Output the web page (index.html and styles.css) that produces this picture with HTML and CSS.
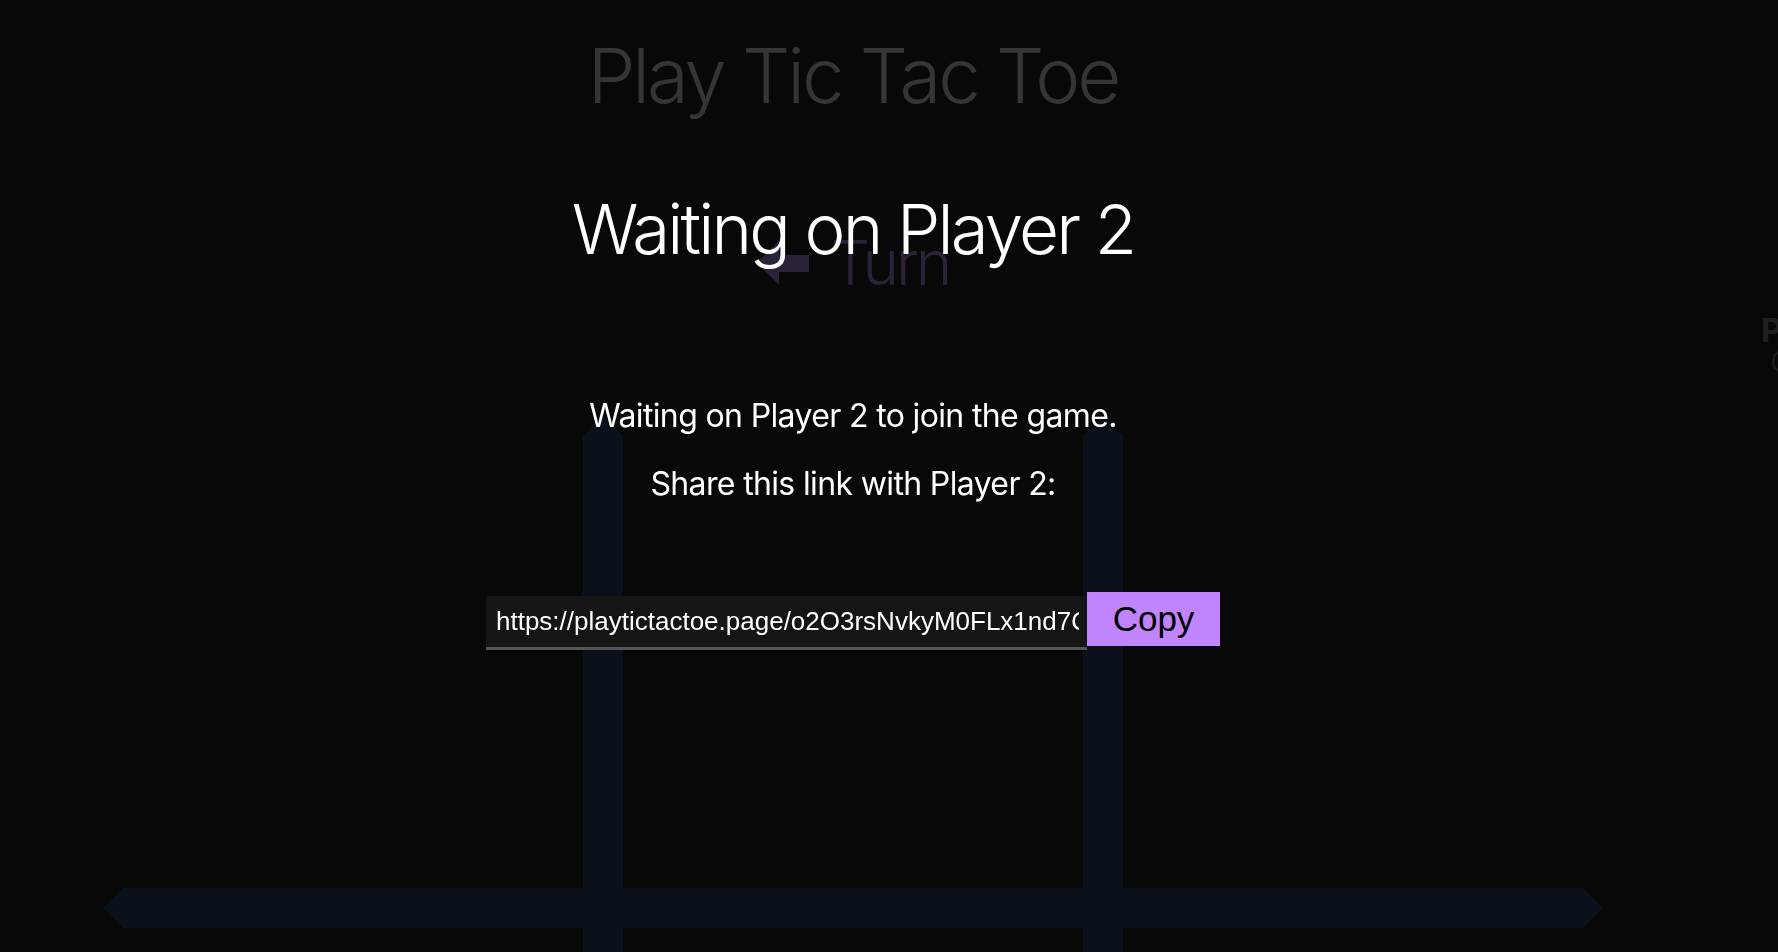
FILE: index.html
```html
<!DOCTYPE html>
<html lang="en">
<head>
<meta charset="utf-8">
<title>Play Tic Tac Toe</title>
<link rel="stylesheet" href="styles.css">
</head>
<body>
<div class="page">
  <main class="game">
    <h1 class="title">Play Tic Tac Toe</h1>
    <div class="turn">
      <svg class="turn-arrow" viewBox="0 0 52 44" width="52" height="44" aria-hidden="true">
        <polygon points="0,22 22,0 22,44" />
        <rect x="20" y="14" width="32" height="17" />
      </svg>
      <span class="turn-label">Turn</span>
    </div>
    <div class="board">
      <div class="line line-v line-v1"></div>
      <div class="line line-v line-v2"></div>
      <div class="line line-h"></div>
    </div>
  </main>
  <aside class="players">
    <div class="player-name">Player 1</div>
    <div class="player-mark">O</div>
  </aside>
</div>

<div class="overlay">
  <div class="modal">
    <h2 class="modal-title">Waiting on Player 2</h2>
    <p class="modal-text">Waiting on Player 2 to join the game.</p>
    <p class="modal-text share-label">Share this link with Player 2:</p>
    <div class="share">
      <input class="share-link" type="text" readonly value="https://playtictactoe.page/o2O3rsNvkyM0FLx1nd7QpRw2">
      <button class="copy-btn" type="button">Copy</button>
    </div>
  </div>
</div>
</body>
</html>
```

FILE: styles.css
```css
html, body {
  margin: 0;
  padding: 0;
}

body {
  width: 1778px;
  height: 952px;
  overflow: hidden;
  background: #080808;
  font-family: "Inter", "Noto Sans", sans-serif;
}

.page {
  display: flex;
  height: 952px;
  overflow: hidden;
}

.game {
  width: 1706px;
  flex: none;
  display: flex;
  flex-direction: column;
  align-items: center;
}

.title {
  margin: 37px 0 0;
  font-size: 76px;
  line-height: 1;
  font-weight: 300;
  letter-spacing: -0.04em;
  color: #353535;
}

.turn {
  margin-top: 120px;
  height: 60px;
  display: flex;
  align-items: center;
  gap: 22px;
  color: #2b2139;
}

.turn-arrow {
  fill: #2b2139;
  display: block;
}

.turn-label {
  font-size: 62px;
  line-height: 1;
  font-weight: 300;
  letter-spacing: -0.05em;
}

.board {
  margin-top: 123px;
  display: grid;
  grid-template-columns: 480px 40px 460px 40px 480px;
  grid-template-rows: 472px 40px 200px;
}

.line {
  background: #0b111a;
}

.line-v {
  grid-row: 1 / 4;
  clip-path: polygon(50% 0, 100% 20px, 100% 100%, 0 100%, 0 20px);
}

.line-v1 { grid-column: 2; }
.line-v2 { grid-column: 4; }

.line-h {
  grid-row: 2;
  grid-column: 1 / 6;
  clip-path: polygon(0 50%, 20px 0, calc(100% - 20px) 0, 100% 50%, calc(100% - 20px) 100%, 20px 100%);
}

.players {
  flex: none;
  padding: 314px 0 0 55px;
  white-space: nowrap;
}

.player-name {
  font-size: 33px;
  line-height: 1;
  font-weight: 700;
  color: #1f1f1f;
}

.player-mark {
  padding-left: 9px;
  font-size: 29px;
  line-height: 1;
  font-weight: 400;
  color: #1b1b1b;
}

/* overlay modal */
.overlay {
  position: fixed;
  inset: 0;
  padding-right: 72px;
  display: flex;
  justify-content: center;
}

.modal {
  display: flex;
  flex-direction: column;
  align-items: center;
  color: #ffffff;
}

.modal-title {
  margin: 195px 0 0;
  font-size: 69px;
  line-height: 1;
  font-weight: 300;
  letter-spacing: -0.041em;
}

.modal-text {
  margin: 0;
  font-size: 32px;
  line-height: 38px;
  font-weight: 400;
  letter-spacing: -0.02em;
}

.modal-title + .modal-text {
  margin-top: 133px;
}

.share-label {
  margin-top: 30px;
}

.share {
  margin-top: 89px;
  display: flex;
  align-items: flex-start;
}

.share-link {
  box-sizing: border-box;
  width: 601px;
  height: 54px;
  margin-top: 4px;
  padding: 0 8px 0 10px;
  border: none;
  border-bottom: 3px solid #555555;
  background: #151515;
  color: #ffffff;
  font-family: "Liberation Sans", Arial, sans-serif;
  font-size: 26px;
  outline: none;
}

.copy-btn {
  box-sizing: border-box;
  width: 133px;
  height: 54px;
  padding: 0;
  border: none;
  background: #c084fc;
  color: #000000;
  font-family: "Liberation Sans", Arial, sans-serif;
  font-size: 35px;
  cursor: pointer;
}
```
